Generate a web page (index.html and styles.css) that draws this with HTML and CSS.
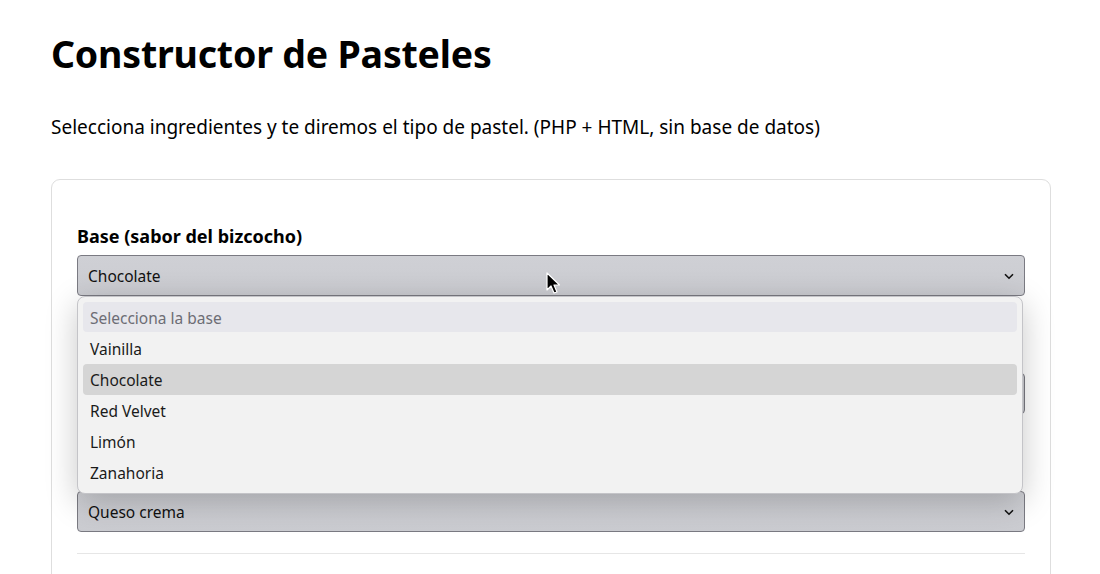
FILE: index.html
```html
<!DOCTYPE html>
<html lang="es">
<head>
<meta charset="utf-8">
<title>Constructor de Pasteles</title>
<link rel="stylesheet" href="styles.css">
</head>
<body>
<main class="page">
  <h1 class="title">Constructor de Pasteles</h1>
  <p class="intro">Selecciona ingredientes y te diremos el tipo de pastel. (PHP + HTML, sin base de datos)</p>
  <section class="card">
    <div class="field">
      <div class="label">Base (sabor del bizcocho)</div>
      <div class="select-wrap">
        <div class="select">
          <span>Chocolate</span>
          <svg class="chev" width="10" height="7" viewBox="0 0 10 7"><path d="M1 1.2 L5 5.2 L9 1.2" fill="none" stroke="#111" stroke-width="1.6"/></svg>
        </div>
        <ul class="dropdown">
          <li class="opt placeholder">Selecciona la base</li>
          <li class="opt">Vainilla</li>
          <li class="opt selected">Chocolate</li>
          <li class="opt">Red Velvet</li>
          <li class="opt">Limón</li>
          <li class="opt">Zanahoria</li>
        </ul>
        <svg class="cursor" width="16" height="24" viewBox="0 0 16 24"><path d="M1 1 L1 18 L5 14 L8 21 L11 20 L8 13 L13.5 13 Z" fill="#000" stroke="#fff" stroke-width="1.2" stroke-linejoin="round"/></svg>
      </div>
    </div>
    <div class="field">
      <div class="label">Relleno</div>
      <div class="select">
        <span>Ganache</span>
        <svg class="chev" width="10" height="7" viewBox="0 0 10 7"><path d="M1 1.2 L5 5.2 L9 1.2" fill="none" stroke="#111" stroke-width="1.6"/></svg>
      </div>
    </div>
    <div class="field last">
      <div class="label">Cobertura</div>
      <div class="select">
        <span>Queso crema</span>
        <svg class="chev" width="10" height="7" viewBox="0 0 10 7"><path d="M1 1.2 L5 5.2 L9 1.2" fill="none" stroke="#111" stroke-width="1.6"/></svg>
      </div>
    </div>
    <hr class="divider">
  </section>
</main>
</body>
</html>
```
FILE: styles.css
```css
html, body {
  margin: 0;
  padding: 0;
  background: #fff;
  color: #000;
  font-family: "Noto Sans", "Open Sans", sans-serif;
}
.page {
  width: 1000px;
  margin: 0 0 0 51px;
  padding-top: 28px;
}
.title {
  margin: 0;
  font-size: 37.5px;
  line-height: 52px;
  font-weight: 700;
  letter-spacing: -0.2px;
}
.intro {
  margin: 34px 0 0;
  font-size: 19px;
  line-height: 26px;
}
.card {
  margin-top: 39px;
  border: 1px solid #dedede;
  border-radius: 9px;
  padding: 44px 25px 60px;
}
.field {
  margin-bottom: 46px;
}
.field.last {
  margin-bottom: 21px;
}
.label {
  font-size: 18px;
  font-weight: 700;
  line-height: 25px;
  margin-bottom: 6px;
}
.select-wrap {
  position: relative;
}
.select {
  height: 41px;
  box-sizing: border-box;
  border: 1px solid #7a7a82;
  border-radius: 4px;
  background: linear-gradient(#cfd0d5, #cbccd1);
  display: flex;
  align-items: center;
  justify-content: space-between;
  padding: 1px 10px 0;
  font-size: 15.5px;
  color: #111;
}
.dropdown {
  position: absolute;
  left: 0;
  top: 41px;
  width: 946px;
  box-sizing: border-box;
  margin: 0;
  padding: 5px;
  list-style: none;
  background: #f2f2f2;
  border: 1px solid #c4c4c8;
  border-radius: 8px;
  box-shadow: 0 8px 32px rgba(0, 0, 0, 0.22);
  z-index: 5;
}
.opt {
  height: 31px;
  box-sizing: border-box;
  padding: 2px 7px 0;
  line-height: 29px;
  font-size: 15.5px;
  color: #1a1a1a;
  border-radius: 4px;
}
.opt.placeholder {
  background: #e7e7ec;
  color: #6d6d75;
  height: 30px;
  margin-bottom: 1px;
}
.opt.selected {
  background: #d5d5d5;
}
.cursor {
  position: absolute;
  left: 469px;
  top: 17px;
  z-index: 6;
}
.divider {
  border: 0;
  border-top: 1px solid #e6e6e6;
  margin: 0;
}
```
